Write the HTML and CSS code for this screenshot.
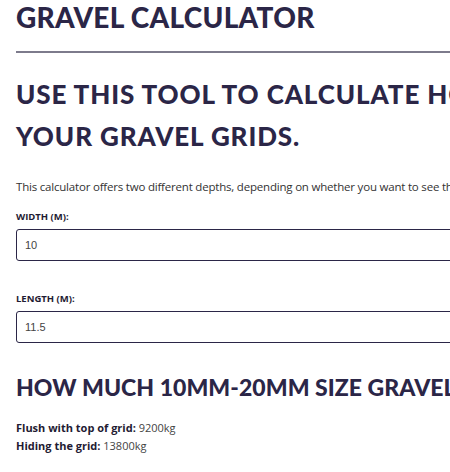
FILE: index.html
```html
<!DOCTYPE html>
<html lang="en">
<head>
    <meta charset="UTF-8">
    <meta name="viewport" content="width=device-width, initial-scale=1.0">
    <title>Gravel Calculator</title>
    <link rel="stylesheet" href="styles.css">
</head>
<body>
    <main class="page">
        <h1 class="page-title">Gravel Calculator</h1>
        <hr class="rule">

        <h2 class="intro-title">Use this tool to calculate how much gravel you need for<br>your gravel grids.</h2>
        <p class="intro-text">This calculator offers two different depths, depending on whether you want to see the grid or hide it beneath the gravel.</p>

        <form class="calc">
            <label class="field">
                <span class="field-label">Width (m):</span>
                <input type="text" value="10">
            </label>
            <label class="field">
                <span class="field-label">Length (m):</span>
                <input type="text" value="11.5">
            </label>
        </form>

        <h3 class="result-title">How much 10mm-20mm size gravel do you need?</h3>
        <ul class="results">
            <li><strong>Flush with top of grid:</strong> 9200kg</li>
            <li><strong>Hiding the grid:</strong> 13800kg</li>
        </ul>
    </main>
</body>
</html>
```

FILE: styles.css
```css
* {
    margin: 0;
    padding: 0;
    box-sizing: border-box;
}
body {
    overflow: hidden;
    background-color: #fff;
    font-family: 'Open Sans', sans-serif;
    color: #333;
}
.page {
    width: 900px;
    padding: 0 16px;
}
.page-title, .intro-title, .result-title {
    font-family: 'Lato', sans-serif;
    font-weight: 900;
    text-transform: uppercase;
    color: #2b2647;
    white-space: nowrap;
}
.page-title {
    font-size: 28px;
    line-height: 34px;
    letter-spacing: 0.3px;
}
.rule {
    border: none;
    border-top: 2px solid #7d7b8c;
    margin-top: 17px;
}
.intro-title {
    margin-top: 20px;
    font-size: 26px;
    line-height: 42px;
    letter-spacing: 0.9px;
}
.intro-text {
    margin-top: 20px;
    font-size: 11.5px;
    line-height: 20px;
    letter-spacing: -0.2px;
    white-space: nowrap;
}
.calc {
    margin-top: 10px;
}
.field {
    display: block;
    margin-bottom: 28px;
}
.field-label {
    display: block;
    font-size: 9.5px;
    font-weight: 700;
    text-transform: uppercase;
    color: #1f1b33;
    line-height: 20px;
    margin-bottom: 2px;
}
.field input {
    width: 100%;
    height: 32px;
    padding: 0 8px;
    border: 1px solid #2b2647;
    border-radius: 3px;
    font-family: 'Liberation Sans', Arial, sans-serif;
    font-size: 11px;
    color: #444;
    background: #fff;
}
.result-title {
    margin-top: 4px;
    font-size: 23px;
    line-height: 32px;
    letter-spacing: 0.05px;
}
.results {
    list-style: none;
    margin-top: 16px;
    font-size: 11px;
    line-height: 18px;
    color: #444;
}
.results strong {
    color: #1f1b33;
}
```
